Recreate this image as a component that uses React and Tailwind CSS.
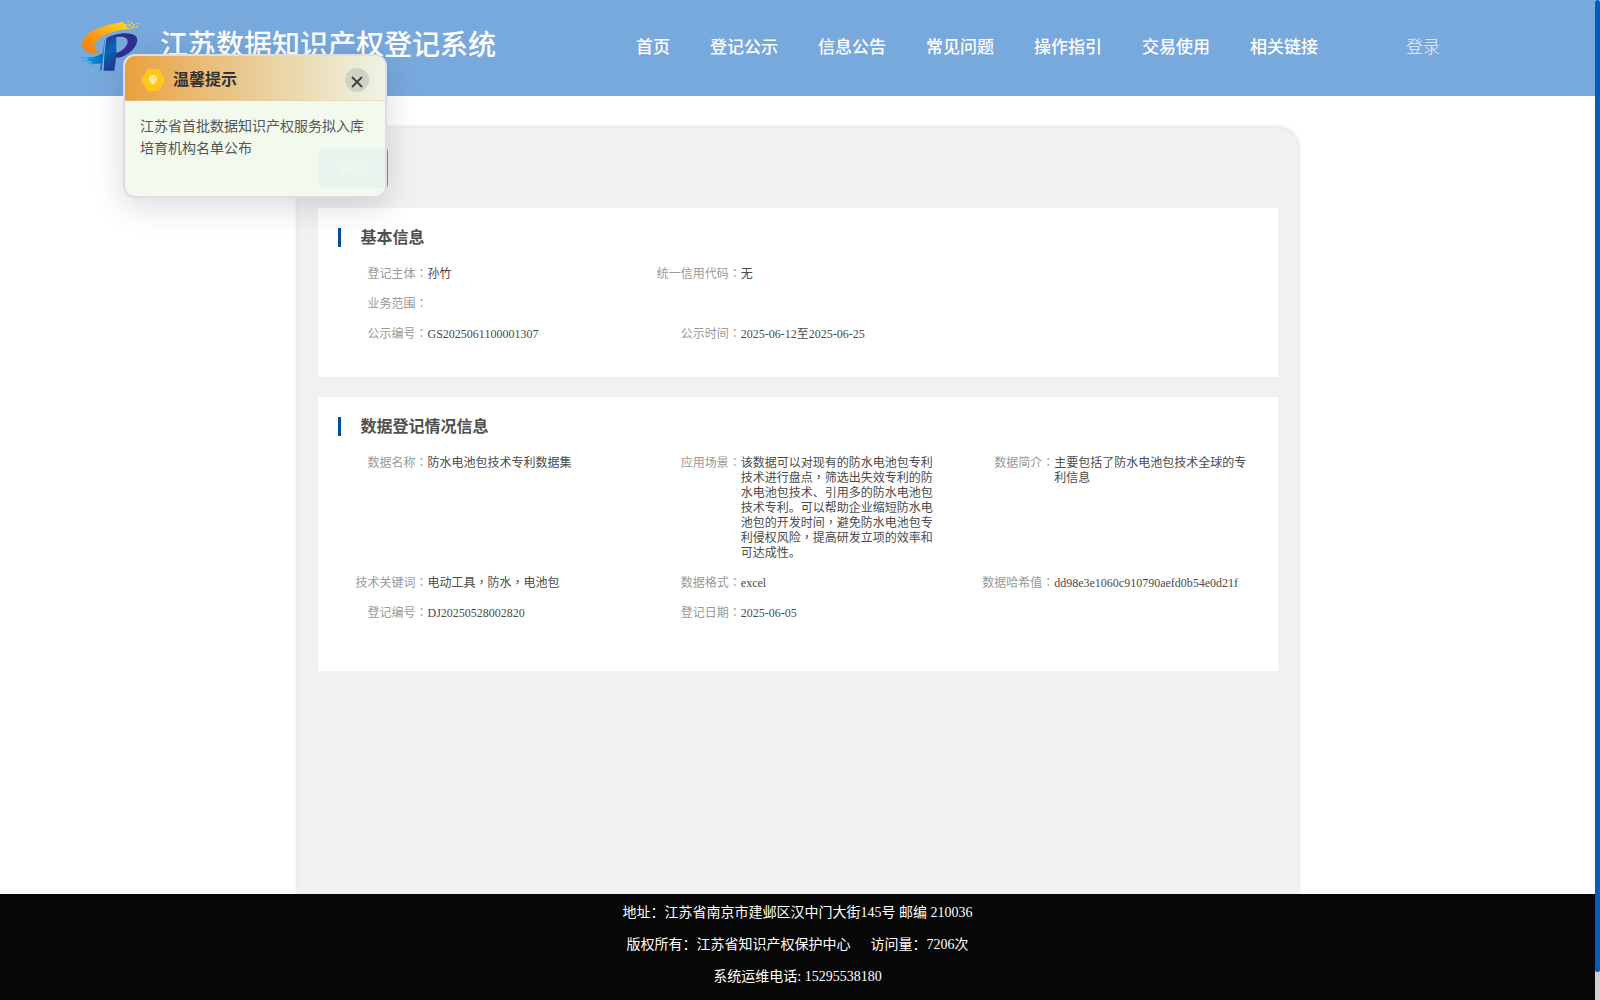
import React, { useState } from "react";

const NAV = ["首页", "登记公示", "信息公告", "常见问题", "操作指引", "交易使用", "相关链接"];

const BASIC = [
  ["登记主体", "孙竹"],
  ["统一信用代码", "无"],
  null,
  ["业务范围", ""],
  null,
  null,
  ["公示编号", "GS2025061100001307"],
  ["公示时间", "2025-06-12至2025-06-25"],
];

const DETAILS = [
  ["数据名称", "防水电池包技术专利数据集"],
  [
    "应用场景",
    "该数据可以对现有的防水电池包专利技术进行盘点，筛选出失效专利的防水电池包技术、引用多的防水电池包技术专利。可以帮助企业缩短防水电池包的开发时间，避免防水电池包专利侵权风险，提高研发立项的效率和可达成性。",
  ],
  ["数据简介", "主要包括了防水电池包技术全球的专利信息"],
  ["技术关键词", "电动工具，防水，电池包"],
  ["数据格式", "excel"],
  ["数据哈希值", "dd98e3e1060c910790aefd0b54e0d21f"],
  ["登记编号", "DJ20250528002820"],
  ["登记日期", "2025-06-05"],
];

function Logo() {
  return (
    <svg viewBox="60 57 180 156" className="h-[52px] w-[60px] shrink-0" aria-hidden="true">
      <defs>
        <linearGradient id="swoosh" x1="0" y1="1" x2="1" y2="0">
          <stop offset="0" stopColor="#f07c00" />
          <stop offset="0.5" stopColor="#fba21c" />
          <stop offset="1" stopColor="#ffe01a" />
        </linearGradient>
        <linearGradient id="stem" x1="0" y1="0" x2="0.3" y2="1">
          <stop offset="0" stopColor="#28348f" />
          <stop offset="0.5" stopColor="#0768ba" />
          <stop offset="1" stopColor="#243a96" />
        </linearGradient>
        <linearGradient id="wave" x1="0" y1="0" x2="1" y2="0">
          <stop offset="0" stopColor="#14a5e4" />
          <stop offset="1" stopColor="#0868bc" />
        </linearGradient>
      </defs>
      <path d="M192 63C150 67 88 84 70 114C58 138 72 158 108 156L122 152C100 148 98 132 112 118C132 98 165 88 210 83L198 77L204 71L190 68Z" fill="url(#swoosh)" />
      <path d="M202 60h6v4h-6zM212 65h6v4h-6zM205 70h7v5h-7zM219 69h5v4h-5zM230 66h6v4h-6zM215 75h7v5h-7zM226 76h6v4h-6zM208 80h6v3h-6z" fill="#ffda1c" />
      <path d="M136 114C156 98 211 88 228 106C240 124 220 152 192 165C184 169 174 171 164 171V157C184 152 202 138 203 122C203 108 188 105 168 108L150 112Z" fill="#2c3191" />
      <path d="M138 114L152 109L169 107V165L163 209H131L133 160Z" fill="url(#stem)" />
      <path d="M134 118L126 165L120 208H126L132 160L137 115Z" fill="#0872c4" />
      <path d="M137 113L131 164L127 209" fill="none" stroke="#a9cff2" strokeWidth="2" />
      <path d="M128 157C112 166 98 170 76 170L84 175L79 179L94 181L91 187L103 189L124 187Z" fill="url(#wave)" />
      <path d="M62 167h6v4h-6zM71 167h6v4h-6zM66 173h8v4h-8zM62 179h6v4h-6zM73 179h7v4h-7zM83 183h6v5h-6zM92 188h6v4h-6z" fill="#20b0e6" />
    </svg>
  );
}

/* Commas and colons take the Traditional face, which centres them in their cell. */
function Centred({ text }) {
  return text.split(/([，：])/).map((part, i) =>
    part === "，" || part === "：" ? (
      <span key={i} lang="zh-TW" className="font-['Liberation_Serif','Noto_Sans_CJK_TC',serif]">{part}</span>
    ) : (
      part
    )
  );
}

function InfoCard({ title, items, className }) {
  return (
    <section className={"bg-white pt-5 pl-5 " + className}>
      <h2 className="flex h-[19px] items-center border-l-3 border-[#004f94] pl-5 text-base leading-[19px] font-bold text-[#505050]">
        {title}
      </h2>
      <dl className="mt-5 grid grid-cols-3 gap-y-[15px] text-xs leading-[15px]">
        {items.map((item, i) =>
          item ? (
            <div key={i} className="flex min-w-0 pr-[30px]">
              <dt className="w-[90px] shrink-0 text-right text-[#999]">
                <Centred text={item[0] + "："} />
              </dt>
              <dd className="min-w-0 flex-1 text-[#4a4a4a]">
                <Centred text={item[1]} />
              </dd>
            </div>
          ) : (
            <div key={i} />
          )
        )}
      </dl>
    </section>
  );
}

function Notice({ onClose }) {
  return (
    <aside
      aria-label="温馨提示"
      className="absolute top-[54px] left-[123px] h-[144px] w-[264px] overflow-hidden rounded-xl border-2 border-[#dcdfe2] bg-[#f1f9ec]/95 shadow-[0_8px_32px_rgba(0,0,0,0.15)]"
    >
      <div className="flex h-[45px] items-center border-b border-[#e8cf9f]/50 bg-linear-to-r from-[#e8a03a] via-[#e9cd97] to-[#eef4e6]/90 px-4 pt-1">
        <svg viewBox="0 0 24 24" className="size-6 shrink-0" aria-hidden="true">
          <path d="M6.5 1H17.5L24 12L17.5 23H6.5L0 12Z" fill="#ffc71a" />
          <circle cx="12" cy="11" r="3.6" fill="#ffdf7c" stroke="#fff0b8" strokeWidth="1" />
          <path d="M10.5 11L12 12.5L13.5 11M12 12.5V15M10.5 15.5H13.5" fill="none" stroke="#fff7dc" strokeWidth="1" />
        </svg>
        <h2 className="ml-2 flex-1 text-base font-bold text-[#333]">温馨提示</h2>
        <button type="button" aria-label="关闭" onClick={onClose} className="flex size-6 items-center justify-center rounded-full bg-[#d0d2c2]">
          <svg viewBox="0 0 24 24" className="size-6" aria-hidden="true">
            <path d="M7 9L17 19M17 9L7 19" stroke="#444" strokeWidth="2" />
          </svg>
        </button>
      </div>
      <p className="px-[15px] pt-[15px] text-sm leading-[22px] text-[#555]">
        江苏省首批数据知识产权服务拟入库培育机构名单公布
      </p>
    </aside>
  );
}

export default function App() {
  const [open, setOpen] = useState(true);
  return (
    <div lang="zh-CN" className="relative flex min-h-screen bg-white font-['Liberation_Serif','Noto_Sans_CJK_SC',serif]">
      <div className="flex min-w-0 flex-1 flex-col">
        <header className="flex h-24 items-center bg-[#78a9dd] pl-20 text-white">
          <div className="flex w-[556px] shrink-0 items-center">
            <div className="-mt-1 flex items-center gap-5">
              <Logo />
              <h1 className="text-[28px] leading-10 font-medium whitespace-nowrap">江苏数据知识产权登记系统</h1>
            </div>
          </div>
          <nav className="flex gap-10 text-[17px] font-medium whitespace-nowrap">
            {NAV.map((n) => (
              <a key={n} href="#">{n}</a>
            ))}
          </nav>
          <a href="#" className="ml-[88px] text-[17px] font-light whitespace-nowrap text-white/85">登录</a>
        </header>

        <main className="mx-auto mt-8 w-full max-w-[1000px] flex-1 rounded-t-[20px] bg-[#f1f1f1] px-5 pt-5 shadow-[0_0_5px_rgba(0,0,0,0.2)]">
          <button type="button" className="block h-10 w-[70px] rounded-sm bg-[#409eff] text-sm text-white">返回</button>
          <InfoCard title="基本信息" items={BASIC} className="mt-5 pb-[35px]" />
          <InfoCard title="数据登记情况信息" items={DETAILS} className="mt-5 pb-[50px]" />
        </main>

        <footer className="relative bg-[#070707] pt-[3px] pb-[7px] text-center text-sm leading-8 text-white">
          <p>地址：江苏省南京市建邺区汉中门大街145号 邮编 210036</p>
          <p>
            <span>版权所有：江苏省知识产权保护中心</span>
            <span className="ml-5">访问量：7206次</span>
          </p>
          <p>系统运维电话: 15295538180</p>
        </footer>
      </div>

      <div className="flex w-[5px] shrink-0 flex-col bg-[#cfcfcf] pb-7" aria-hidden="true">
        <div className="flex-1 rounded-sm bg-[#005bc4]" />
      </div>

      {open && <Notice onClose={() => setOpen(false)} />}
    </div>
  );
}
